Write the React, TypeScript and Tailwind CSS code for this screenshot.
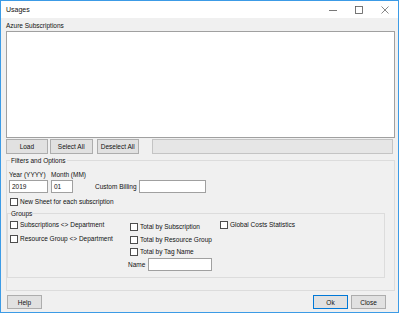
import React from "react";

const Check = ({ label, className = "" }: { label: string; className?: string }) => (
  <div className={`flex h-[9px] items-center gap-[2px] ${className}`}>
    <span className="h-[8px] w-[8px] shrink-0 border border-[#4d4d4d] bg-white" />
    <span className="whitespace-nowrap">{label}</span>
  </div>
);

const Btn = ({ label, w, primary = false }: { label: string; w: string; primary?: boolean }) => (
  <div
    className={`flex h-full items-center justify-center border bg-[#e1e1e1] ${w} ${
      primary ? "border-[#0078d7]" : "border-[#adadad]"
    }`}
  >
    {label}
  </div>
);

export default function App() {
  return (
    <div className="flex h-[313px] w-[399px] flex-col border border-[#3c9be6] bg-[#f0f0f0] font-['Liberation_Sans',Arial,sans-serif] text-[6.5px] leading-[9px] text-[#111]">
      {/* title bar */}
      <div className="flex h-[17px] shrink-0 items-center justify-between bg-white pl-[5px]">
        <span className="text-[7px]">Usages</span>
        <div className="flex h-full">
          <div className="flex w-[26px] items-center justify-center">
            <svg width="8" height="8" viewBox="0 0 8 8">
              <path d="M0 4.5H8" stroke="#555" strokeWidth="0.8" />
            </svg>
          </div>
          <div className="flex w-[26px] items-center justify-center">
            <svg width="8" height="8" viewBox="0 0 8 8">
              <rect x="0.5" y="0.5" width="7" height="7" fill="none" stroke="#555" strokeWidth="0.8" />
            </svg>
          </div>
          <div className="flex w-[26px] items-center justify-center">
            <svg width="8" height="8" viewBox="0 0 8 8">
              <path d="M0.5 0.5L7.5 7.5M7.5 0.5L0.5 7.5" stroke="#555" strokeWidth="0.7" />
            </svg>
          </div>
        </div>
      </div>

      {/* body */}
      <div className="flex flex-1 flex-col px-[5px] pt-[3px]">
        <div className="h-[9px]">Azure Subscriptions</div>
        <div className="mt-[1px] h-[107px] w-[389px] border border-[#a0a0a0] bg-white" />

        <div className="mt-[1px] flex h-[15px]">
          <Btn label="Load" w="w-[42px]" />
          <div className="ml-[2px] h-full">
            <Btn label="Select All" w="w-[43px]" />
          </div>
          <div className="ml-[4px] h-full">
            <Btn label="Deselect All" w="w-[42px]" />
          </div>
          <div className="ml-[13px] h-full w-[243px] border border-[#c4c4c4] bg-[#e6e6e6]" />
        </div>

        {/* Filters and Options */}
        <div className="relative mt-[6px] h-[131px] w-[389px] border border-[#dcdcdc]">
          <span className="absolute left-[3px] top-[-5px] bg-[#f0f0f0] px-[1px]">Filters and Options</span>

          <div className="flex pl-[2px] pt-[9px]">
            <div className="flex w-[42px] flex-col">
              <span className="h-[9px] whitespace-nowrap">Year (YYYY)</span>
              <div className="mt-[1px] flex h-[13px] w-[39px] items-center border border-[#a0a0a0] bg-white pl-[2px]">
                2019
              </div>
            </div>
            <div className="flex w-[22px] flex-col">
              <span className="h-[9px] whitespace-nowrap">Month (MM)</span>
              <div className="mt-[1px] flex h-[13px] w-[22px] items-center border border-[#a0a0a0] bg-white pl-[2px]">
                01
              </div>
            </div>
            <div className="ml-[22px] flex items-end">
              <span className="flex h-[13px] w-[44px] items-center whitespace-nowrap">Custom Billing</span>
              <div className="h-[13px] w-[67px] border border-[#a0a0a0] bg-white" />
            </div>
          </div>

          <Check label="New Sheet for each subscription" className="mt-[4px] pl-[3px]" />

          {/* Groups */}
          <div className="relative mt-[7px] h-[65px] w-[378px] border border-[#dcdcdc]">
            <span className="absolute left-[3px] top-[-5px] bg-[#f0f0f0]">Groups</span>
            <div className="flex">
              <div className="flex w-[120px] flex-col gap-[5px] pl-[2px] pt-[6px]">
                <Check label="Subscriptions <> Department" />
                <Check label="Resource Group <> Department" />
              </div>
              <div className="flex w-[92px] flex-col pt-[8px]">
                <Check label="Total by Subscription" className="ml-[2px]" />
                <Check label="Total by Resource Group" className="ml-[2px] mt-[4px]" />
                <Check label="Total by Tag Name" className="ml-[2px] mt-[3px]" />
                <div className="mt-[2px] flex h-[13px] items-center">
                  <span className="w-[20px]">Name</span>
                  <div className="h-[13px] w-[64px] border border-[#a0a0a0] bg-white" />
                </div>
              </div>
              <div className="flex flex-col pt-[6px]">
                <Check label="Global Costs Statistics" />
              </div>
            </div>
          </div>
        </div>

        {/* footer buttons */}
        <div className="mt-[4px] flex h-[14px] justify-between pl-[1px] pr-[7px]">
          <Btn label="Help" w="w-[35px]" />
          <div className="flex h-full gap-[3px]">
            <Btn label="Ok" w="w-[35px]" primary />
            <Btn label="Close" w="w-[35px]" />
          </div>
        </div>
      </div>
    </div>
  );
}
